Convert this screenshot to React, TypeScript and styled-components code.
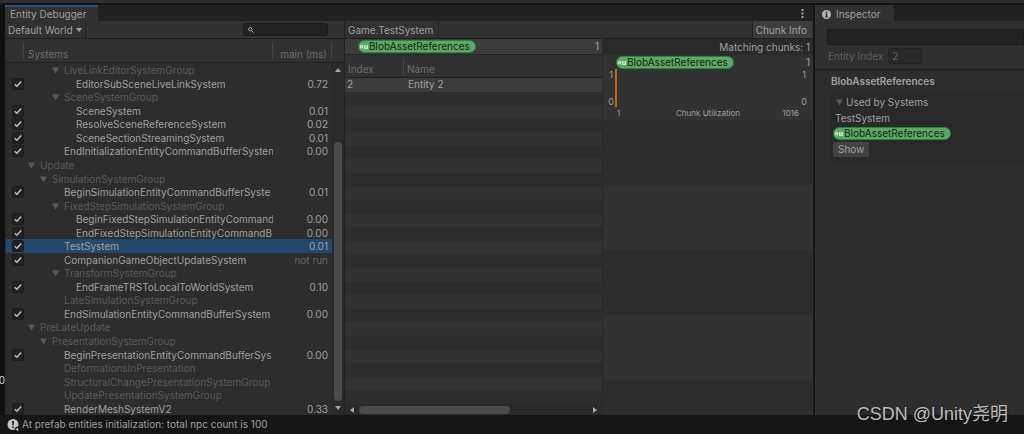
import React from 'react';
import styled, { createGlobalStyle, css } from 'styled-components';

const GlobalStyle = createGlobalStyle`
  *, *::before, *::after { box-sizing: border-box; }
  body {
    margin: 0;
    background: #131313;
    color: #a0a0a0;
    font: 10px/13px Inter, "Noto Sans CJK SC", sans-serif;
  }
  button, input, select { font: inherit; color: inherit; margin: 0; padding: 0; border: 0; }
  button, select { cursor: pointer; }
  h2, p { margin: 0; font: inherit; }
`;

/* ---------- window frame ---------- */

const Screen = styled.div`
  position: relative;
  display: flex;
  flex-direction: column;
  min-height: 100vh;
`;

const TopStrip = styled.div`
  height: 5px;
  background: #2f2f2f;
  border-bottom: 2px solid #131313;
`;

const Workspace = styled.div`
  flex: 1;
  display: flex;
`;

const Gutter = styled.div`
  flex: none;
  width: 5px;
  display: flex;
  flex-direction: column;
  justify-content: flex-end;
  padding-bottom: 28px;
  overflow: hidden;
  direction: rtl;
  color: #d8d8d8;
  background: #101010;
`;

const Debugger = styled.main`
  flex: 808 1 0;
  min-width: 0;
  display: flex;
  flex-direction: column;
  background: #2d2d2d;
`;

const InspectorPanel = styled.aside`
  flex: 209 1 0;
  min-width: 0;
  border-left: 2px solid #171717;
  background: #2d2d2d;
`;

const TabBar = styled.header`
  display: flex;
  justify-content: space-between;
  height: 16px;
  background: #212121;
`;

const Tab = styled.h2<{ $active?: boolean }>`
  display: flex;
  align-items: center;
  gap: 5px;
  padding: 2px 12px 0 5px;
  background: #313131;
  box-shadow: ${p => (p.$active ? 'inset 0 2px #2b5480' : 'none')};
`;

const InspectorTab = styled(Tab)`
  padding: 2px 14px 0 7px;
`;

const IconButton = styled.button`
  display: flex;
  align-items: center;
  padding: 0 9px;
  background: none;
`;

const Split = styled.div`
  display: grid;
  grid-template-columns: minmax(0, 339fr) minmax(0, 469fr);
`;

const Toolbar = styled.div`
  display: flex;
  align-items: stretch;
  height: 18px;
  border-bottom: 1px solid #1f1f1f;
  background: #313131;
`;

const ToolbarEnd = styled(Toolbar)`
  justify-content: space-between;
  border-left: 1px solid #222;
`;

const WorldPicker = styled.label`
  display: grid;
  grid-template-columns: 100%;
  align-items: center;
  width: 81px;
  border-right: 1px solid #222;

  > * { grid-area: 1 / 1; }
  > svg { justify-self: end; margin-right: 3px; pointer-events: none; }
`;

const WorldSelect = styled.select`
  appearance: none;
  height: 17px;
  padding: 1px 0 0 3px;
  background: none;
`;

const Search = styled.label`
  display: flex;
  align-items: center;
  width: 85px;
  height: 13px;
  margin: 2px 16px 0 auto;
  padding-left: 4px;
  border: 1px solid #1a1a1a;
  border-radius: 3px;
  background: #222;
`;

const SearchInput = styled.input`
  flex: 1;
  min-width: 0;
  height: 11px;
  background: none;
`;

const SystemTitle = styled.div`
  display: flex;
  align-items: center;
  padding: 1px 5px 0 3px;
  border-right: 1px solid #222;
`;

const ChunkToggle = styled.button`
  padding: 1px 5px 0 3px;
  margin-right: 1px;
  background: #3d3d3d;
  border-left: 1px solid #222;
`;

/* ---------- systems tree ---------- */

const Columns = styled.div`
  flex: 1;
  display: grid;
  grid-template-columns: minmax(0, 339fr) minmax(0, 259fr) minmax(0, 210fr);
`;

const SystemsPane = styled.section`
  display: grid;
  grid-template-columns: minmax(0, 1fr) 12px;
  padding-left: 1px;
`;

const SystemsTable = styled.table`
  display: grid;
  grid-template-rows: 24px 1fr;

  thead, tbody { display: grid; }
  tbody { grid-auto-rows: minmax(13px, 1fr); }
`;

const rowGrid = css`
  display: grid;
  grid-template-columns: 18px minmax(0, 1fr) 59px;
`;

const HeadRow = styled.tr`
  ${rowGrid}
  padding-top: 4px;
  background: #313131;
  border-bottom: 1px solid #1f1f1f;
`;

const HeadCell = styled.th<{ $right?: boolean }>`
  padding: 5px 4px 0;
  height: 17px;
  font-weight: 400;
  white-space: nowrap;
  text-align: ${p => (p.$right ? 'right' : 'left')};
  color: #6e6e6e;
  border-right: 1px solid #444;
`;

const SystemRow = styled.tr<{ $selected?: boolean }>`
  ${rowGrid}
  align-items: center;
  line-height: 11px;
  background: ${p => (p.$selected ? '#24486b' : 'transparent')};
`;

const CheckCell = styled.td`
  padding: 1px 0 0 6px;
`;

const CheckLabel = styled.label`
  display: grid;
  place-items: center;
  width: 12px;
  height: 12px;

  > * { grid-area: 1 / 1; pointer-events: none; }
`;

const Check = styled.input`
  appearance: none;
  width: 12px;
  height: 12px;
  border: 1px solid #1b1b1b;
  border-radius: 2px;
  background: #222;
`;

const NameCell = styled.td<{ $depth: number; $dim?: boolean }>`
  display: flex;
  align-items: center;
  gap: 5px;
  padding: 2px 0 0 ${p => 4 + p.$depth * 12}px;
  overflow: hidden;
  white-space: nowrap;
  color: ${p => (p.$dim ? '#5c5c5c' : 'inherit')};

  > svg { flex: none; }
`;

const TimeCell = styled.td<{ $dim?: boolean }>`
  padding: 2px 4px 0 0;
  text-align: right;
  white-space: nowrap;
  color: ${p => (p.$dim ? '#666' : 'inherit')};
`;

const VScroll = styled.div`
  grid-column: 2;
  display: flex;
  flex-direction: column;
  align-items: center;
  gap: 4px;
  padding-bottom: 4px;
  background: #2a2a2a;

  &::before {
    content: "";
    align-self: stretch;
    height: 24px;
    background: #313131;
    border-bottom: 1px solid #1f1f1f;
  }
`;

const VTrack = styled.div`
  flex: 1;
  display: flex;
  flex-direction: column;
  justify-content: flex-end;
`;

const VThumb = styled.div`
  width: 8px;
  height: 80%;
  border-radius: 4px;
  background: #4b4b4b;
`;

/* ---------- entity list ---------- */

const EntityPane = styled.section`
  display: flex;
  flex-direction: column;
  border-left: 1px solid #222;
  border-right: 1px solid #292929;
`;

const Query = styled.div`
  display: flex;
  align-items: center;
  justify-content: space-between;
  height: 16px;
  padding: 0 3px 0 13px;
  background: #3c3c3c;
  border-bottom: 1px solid #262626;
`;

const Tag = styled.span`
  display: inline-flex;
  align-items: center;
  gap: 1px;
  height: 13px;
  padding: 0 5px 0 1px;
  border: 1px solid #1f8a38;
  border-radius: 7px;
  background: #5fa768;
  color: #10240f;
  line-height: 11px;
  white-space: nowrap;
`;

const EntityTable = styled.table`
  flex: 1;
  display: grid;
  grid-template-rows: 23px 1fr;

  thead, tbody { display: grid; }
  tbody { grid-auto-rows: minmax(13px, 1fr); }
`;

const entityGrid = css`
  display: grid;
  grid-template-columns: 59px minmax(0, 1fr);
`;

const EntityHead = styled.tr`
  ${entityGrid}
  padding-top: 3px;
  background: #313131;
  border-bottom: 1px solid #1f1f1f;
`;

const EntityHeadCell = styled(HeadCell)`
  padding: 5px 3px 0;
  &:last-child { border-right: 0; }
`;

const EntityRow = styled.tr<{ $selected?: boolean }>`
  ${entityGrid}
  align-items: center;
  background: #2d2d2d;
  &:nth-child(odd) { background: ${p => (p.$selected ? '#3c3c3c' : '#323232')}; }
`;

const EntityCell = styled.td`
  padding: 0 0 0 2px;
  & + & { padding-left: 4px; }
`;

const HScroll = styled.div`
  display: flex;
  align-items: center;
  gap: 4px;
  height: 11px;
  padding: 0 4px;
  background: #2a2a2a;
`;

const HTrack = styled.div`
  flex: 1;
`;

const HThumb = styled.div`
  width: 66%;
  height: 8px;
  border-radius: 4px;
  background: #4b4b4b;
`;

/* ---------- chunk info ---------- */

const ChunkPane = styled.section`
  display: grid;
  grid-template-columns: minmax(0, 1fr);
  grid-template-rows: 16px repeat(5, 65fr) 35fr;
`;

const Matching = styled.p`
  padding: 2px 3px 0 0;
  text-align: right;
  background: #2a2a2a;
`;

const Band = styled.div`
  padding: 1px 3px 0 4px;
  background: #2d2d2d;
  &:nth-child(even) { background: #323232; }
`;

const BandTitle = styled.div`
  display: flex;
  justify-content: space-between;
  align-items: center;
  padding-left: 9px;
`;

const Plot = styled.div`
  display: flex;
  justify-content: space-between;
  height: 38px;
  padding-right: 2px;
  font-size: 9px;
  line-height: 11px;
`;

const Axis = styled.div`
  display: flex;
  flex-direction: column;
  justify-content: space-between;
  flex: none;
  width: 8px;
  text-align: center;
`;

const Bars = styled.svg`
  flex: 1;
  width: 0;
  min-width: 0;
  height: 38px;
`;

const PlotCaption = styled.div`
  display: grid;
  grid-template-columns: 1fr auto 1fr;
  padding: 0 11px 0 10px;
  font-size: 8px;
  line-height: 12px;

  > :last-child { text-align: right; }
`;

/* ---------- inspector ---------- */

const InspectorHead = styled.div`
  display: flex;
  flex-direction: column;
  gap: 3px;
  height: 49px;
  padding: 8px 0 0 12px;
  background: #2f2f2f;
  border-bottom: 1px solid #1d1d1d;
`;

const NameInput = styled.input`
  width: 100%;
  height: 16px;
  border: 1px solid #1a1a1a;
  border-radius: 3px 0 0 3px;
  background: #222;
`;

const IndexField = styled.label`
  display: flex;
  align-items: center;
  gap: 5px;
  padding-left: 1px;
  color: #5f5f5f;
`;

const IndexInput = styled.input`
  width: 34px;
  height: 16px;
  padding: 0 3px;
  border: 1px solid #232323;
  border-radius: 3px;
  background: #292929;
`;

const InspectorBody = styled.div`
  display: flex;
  flex-direction: column;
  gap: 4px;
  padding: 5px 0 0 16px;
`;

const ComponentName = styled.h2`
  font-weight: 600;
`;

const Group = styled.div`
  display: flex;
  flex-direction: column;
  align-items: flex-start;
  gap: 2px;
  padding: 4px 0 4px 2px;
  background: #292929;
`;

const Foldout = styled.button`
  display: flex;
  align-items: center;
  gap: 3px;
  padding-left: 3px;
  background: none;
`;

const SystemName = styled.p`
  padding: 1px 0 0 2px;
`;

const ShowButton = styled.button`
  height: 15px;
  padding: 0 5px;
  border-radius: 2px;
  background: #424242;
`;

const StatusBar = styled.footer`
  display: flex;
  align-items: center;
  gap: 3px;
  height: 19px;
  padding-left: 7px;
  background: #151515;
`;

const Watermark = styled.div`
  position: absolute;
  right: 16px;
  bottom: 8px;
  font: 18px/24px "Liberation Sans", "Noto Sans CJK SC", sans-serif;
  color: #bdbdbd;
  text-shadow: 1px 1px 1px #111;
`;

/* ---------- drawings ---------- */

const Fold = () => (
  <svg width="7" height="7" viewBox="0 0 7 7" fill="#5a5a5a" aria-hidden="true">
    <path d="M0 .5h7L3.500 6.500z" />
  </svg>
);

const arrows = {
  up: 'M0 5L3 1l3 4z',
  down: 'M0 1h6l-3 4z',
  left: 'M5 0v6L1 3z',
  right: 'M1 0v6l4-3z',
};

const Arrow = ({ dir }: { dir: keyof typeof arrows }) => (
  <svg width="6" height="6" viewBox="0 0 6 6" fill="#a8a8a8" aria-hidden="true">
    <path d={arrows[dir]} />
  </svg>
);

const Tick = () => (
  <svg width="8" height="8" viewBox="0 0 8 8" fill="none" stroke="#c0c0c0" strokeWidth="1.5" aria-hidden="true">
    <path d="M.8 4.200L2.900 6.200 7.200 1.500" />
  </svg>
);

const AccessIcon = () => (
  <svg width="8" height="6" viewBox="0 0 8 6" fill="none" stroke="#d5ead6" strokeWidth="1" aria-hidden="true">
    <path d="M.5 4.500V1.500h2V3h-2M2.500 3v1.500M4.500 1v3.500h3V1M6 1v3" />
  </svg>
);

const ComponentTag = ({ name }: { name: string }) => (
  <Tag>
    <AccessIcon />
    {name}
  </Tag>
);

/* ---------- data ---------- */

type System = { name: string; depth: number; group?: boolean; dim?: boolean; time?: string; selected?: boolean };

const systems: System[] = [
  { name: 'LiveLinkEditorSystemGroup', depth: 2, group: true },
  { name: 'EditorSubSceneLiveLinkSystem', depth: 4, time: '0.72' },
  { name: 'SceneSystemGroup', depth: 2, group: true },
  { name: 'SceneSystem', depth: 4, time: '0.01' },
  { name: 'ResolveSceneReferenceSystem', depth: 4, time: '0.02' },
  { name: 'SceneSectionStreamingSystem', depth: 4, time: '0.01' },
  { name: 'EndInitializationEntityCommandBufferSystem', depth: 3, time: '0.00' },
  { name: 'Update', depth: 0, group: true },
  { name: 'SimulationSystemGroup', depth: 1, group: true },
  { name: 'BeginSimulationEntityCommandBufferSyste', depth: 3, time: '0.01' },
  { name: 'FixedStepSimulationSystemGroup', depth: 2, group: true },
  { name: 'BeginFixedStepSimulationEntityCommand', depth: 4, time: '0.00' },
  { name: 'EndFixedStepSimulationEntityCommandB', depth: 4, time: '0.00' },
  { name: 'TestSystem', depth: 3, time: '0.01', selected: true },
  { name: 'CompanionGameObjectUpdateSystem', depth: 3, time: 'not run' },
  { name: 'TransformSystemGroup', depth: 2, group: true },
  { name: 'EndFrameTRSToLocalToWorldSystem', depth: 4, time: '0.10' },
  { name: 'LateSimulationSystemGroup', depth: 3, dim: true },
  { name: 'EndSimulationEntityCommandBufferSystem', depth: 3, time: '0.00' },
  { name: 'PreLateUpdate', depth: 0, group: true },
  { name: 'PresentationSystemGroup', depth: 1, group: true },
  { name: 'BeginPresentationEntityCommandBufferSys', depth: 3, time: '0.00' },
  { name: 'DeformationsInPresentation', depth: 3, dim: true },
  { name: 'StructuralChangePresentationSystemGroup', depth: 3, dim: true },
  { name: 'UpdatePresentationSystemGroup', depth: 3, dim: true },
  { name: 'RenderMeshSystemV2', depth: 3, time: '0.33' },
];

const EMPTY_ROWS = 23;

export default function App() {
  return (
    <Screen>
      <GlobalStyle />
      <TopStrip />
      <Workspace>
        <Gutter>0</Gutter>
        <Debugger>
          <TabBar>
            <Tab $active>Entity Debugger</Tab>
            <IconButton aria-label="Window menu">
              <svg width="3" height="9" viewBox="0 0 3 9" fill="#a8a8a8">
                <path d="M.5 0h2v2h-2zM.5 3.500h2v2h-2zM.5 7h2v2h-2z" />
              </svg>
            </IconButton>
          </TabBar>
          <Split>
            <Toolbar>
              <WorldPicker>
                <WorldSelect aria-label="World">
                  <option>Default World</option>
                </WorldSelect>
                <Arrow dir="down" />
              </WorldPicker>
              <Search>
                <svg width="6" height="6" viewBox="0 0 6 6" fill="none" stroke="#a8a8a8" aria-hidden="true">
                  <circle cx="2.300" cy="2.300" r="1.700" />
                  <path d="M3.500 3.500L5.700 5.700" />
                </svg>
                <SearchInput type="text" aria-label="Search systems" />
              </Search>
            </Toolbar>
            <ToolbarEnd>
              <SystemTitle>Game.TestSystem</SystemTitle>
              <ChunkToggle>Chunk Info</ChunkToggle>
            </ToolbarEnd>
          </Split>
          <Columns>
            <SystemsPane>
              <SystemsTable>
                <thead>
                  <HeadRow>
                    <HeadCell aria-label="Enabled" />
                    <HeadCell>Systems</HeadCell>
                    <HeadCell $right>main (ms)</HeadCell>
                  </HeadRow>
                </thead>
                <tbody>
                  {systems.map(s => (
                    <SystemRow key={s.name} $selected={s.selected}>
                      <CheckCell>
                        {s.time && (
                          <CheckLabel>
                            <Check type="checkbox" defaultChecked aria-label={s.name} />
                            <Tick />
                          </CheckLabel>
                        )}
                      </CheckCell>
                      <NameCell $depth={s.depth} $dim={s.group || s.dim}>
                        {s.group && <Fold />}
                        {s.name}
                      </NameCell>
                      <TimeCell $dim={s.time === 'not run'}>{s.time}</TimeCell>
                    </SystemRow>
                  ))}
                </tbody>
              </SystemsTable>
              <VScroll>
                <Arrow dir="up" />
                <VTrack>
                  <VThumb />
                </VTrack>
                <Arrow dir="down" />
              </VScroll>
            </SystemsPane>
            <EntityPane>
              <Query>
                <ComponentTag name="BlobAssetReferences" />
                <span>1</span>
              </Query>
              <EntityTable>
                <thead>
                  <EntityHead>
                    <EntityHeadCell>Index</EntityHeadCell>
                    <EntityHeadCell>Name</EntityHeadCell>
                  </EntityHead>
                </thead>
                <tbody>
                  <EntityRow $selected>
                    <EntityCell>2</EntityCell>
                    <EntityCell>Entity 2</EntityCell>
                  </EntityRow>
                  {Array.from({ length: EMPTY_ROWS }, (_, i) => (
                    <EntityRow key={i} />
                  ))}
                </tbody>
              </EntityTable>
              <HScroll>
                <Arrow dir="left" />
                <HTrack>
                  <HThumb />
                </HTrack>
                <Arrow dir="right" />
              </HScroll>
            </EntityPane>
            <ChunkPane>
              <Matching>Matching chunks: 1</Matching>
              <Band>
                <BandTitle>
                  <ComponentTag name="BlobAssetReferences" />
                  <span>1</span>
                </BandTitle>
                <Plot>
                  <Axis>
                    <span>1</span>
                    <span>0</span>
                  </Axis>
                  <Bars aria-hidden="true">
                    <rect width="2" height="38" fill="#b5700c" />
                  </Bars>
                  <Axis>
                    <span>1</span>
                    <span>0</span>
                  </Axis>
                </Plot>
                <PlotCaption>
                  <span>1</span>
                  <span>Chunk Utilization</span>
                  <span>1016</span>
                </PlotCaption>
              </Band>
              <Band />
              <Band />
              <Band />
              <Band />
              <Band />
            </ChunkPane>
          </Columns>
        </Debugger>
        <InspectorPanel>
          <TabBar>
            <InspectorTab>
              <svg width="9" height="9" viewBox="0 0 9 9" aria-hidden="true">
                <circle cx="4.500" cy="4.500" r="4.500" fill="#b4b4b4" />
                <path d="M3.800 1.500h1.500v1.300H3.800zM3.300 3.600h2v3h.6v.9H3.200v-.9h.7V4.500h-.6z" fill="#2a2a2a" />
              </svg>
              Inspector
            </InspectorTab>
          </TabBar>
          <InspectorHead>
            <NameInput type="text" aria-label="Entity name" />
            <IndexField>
              Entity Index
              <IndexInput type="text" defaultValue="2" readOnly />
            </IndexField>
          </InspectorHead>
          <InspectorBody>
            <ComponentName>BlobAssetReferences</ComponentName>
            <Group>
              <Foldout>
                <Fold />
                Used by Systems
              </Foldout>
              <SystemName>TestSystem</SystemName>
              <ComponentTag name="BlobAssetReferences" />
              <ShowButton>Show</ShowButton>
            </Group>
          </InspectorBody>
        </InspectorPanel>
      </Workspace>
      <StatusBar>
        <svg width="12" height="12" viewBox="0 0 12 12" aria-hidden="true">
          <path d="M6 0a5.500 5.500 0 1 1 0 11 5.500 5.500 0 0 1 0-11zM7 10l4.500 2L10.500 7z" fill="#c6c6c6" />
          <path d="M5 2h2l-.4 4.500H5.400zM5.200 7.500h1.600V9H5.200z" fill="#1c1c1c" />
        </svg>
        At prefab entities initialization: total npc count is 100
      </StatusBar>
      <Watermark>CSDN @Unity尧明</Watermark>
    </Screen>
  );
}
